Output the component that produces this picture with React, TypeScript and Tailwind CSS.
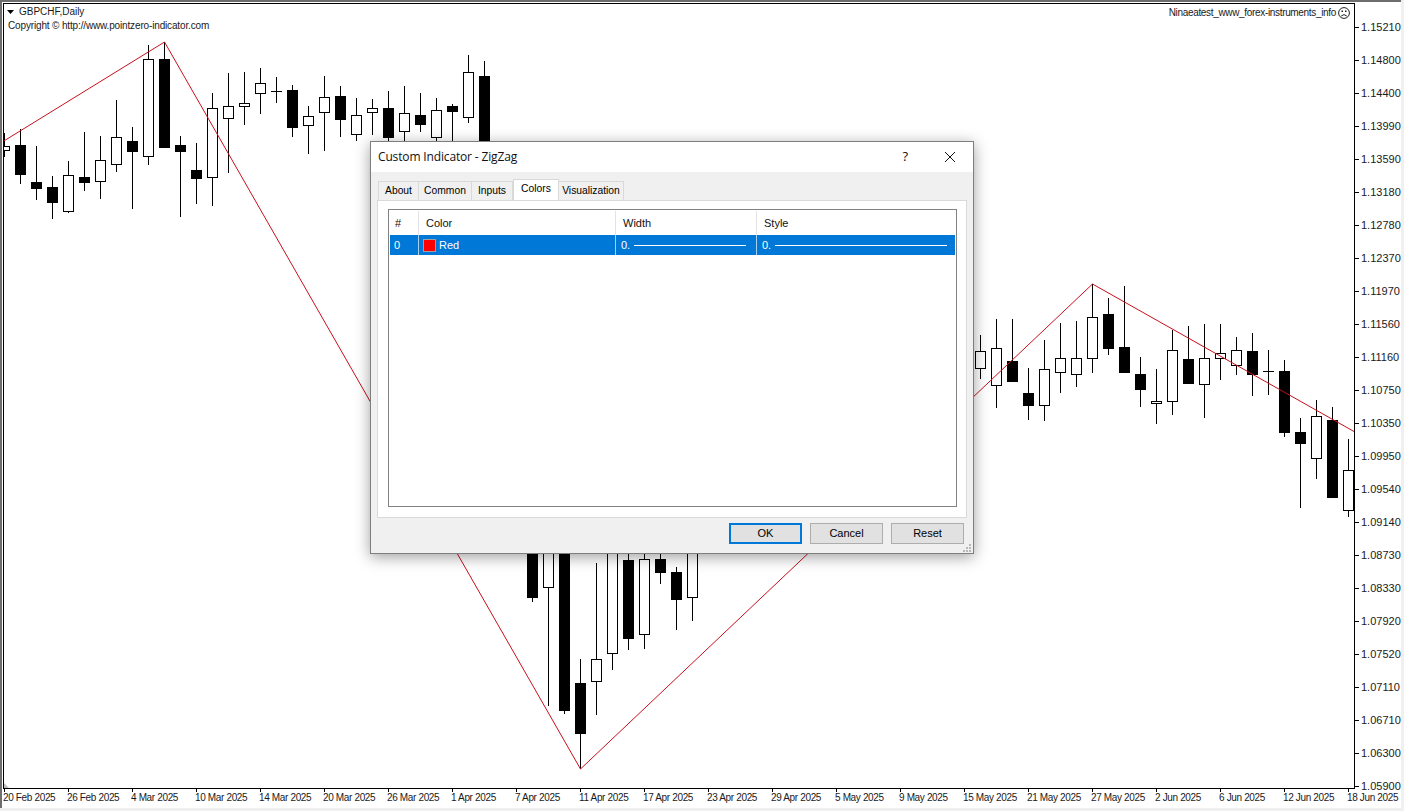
import React from "react";

type C = [number, number, number, number, number, "w" | "b"];

const candles: C[] = [
  [4, 133, 157, 146, 150, "w"],
  [20, 129, 184, 145, 174, "b"],
  [36, 146, 200, 182, 188, "b"],
  [52, 176, 219, 187, 202, "b"],
  [68, 161, 213, 175, 211, "w"],
  [84, 132, 191, 177, 182, "b"],
  [100, 136, 199, 160, 181, "w"],
  [116, 100, 172, 137, 164, "w"],
  [132, 127, 209, 141, 151, "b"],
  [148, 45, 165, 59, 156, "w"],
  [164, 42, 148, 59, 147, "b"],
  [180, 136, 217, 145, 151, "b"],
  [196, 143, 204, 170, 178, "b"],
  [212, 93, 206, 108, 177, "w"],
  [228, 73, 173, 106, 118, "w"],
  [244, 72, 125, 103, 106, "w"],
  [260, 68, 114, 83, 93, "w"],
  [276, 77, 103, 91, 91, "w"],
  [292, 85, 137, 90, 127, "b"],
  [308, 106, 154, 116, 125, "w"],
  [324, 76, 151, 97, 112, "w"],
  [340, 86, 137, 96, 119, "b"],
  [356, 98, 141, 115, 134, "w"],
  [372, 99, 135, 108, 112, "w"],
  [388, 91, 150, 108, 137, "b"],
  [404, 86, 150, 113, 131, "w"],
  [420, 93, 132, 115, 124, "b"],
  [436, 98, 150, 110, 137, "w"],
  [452, 104, 150, 106, 111, "b"],
  [468, 55, 123, 72, 117, "w"],
  [484, 61, 160, 76, 160, "b"],
  [532, 540, 602, 540, 597, "b"],
  [548, 540, 706, 540, 587, "w"],
  [564, 540, 714, 540, 710, "b"],
  [580, 659, 769, 683, 733, "b"],
  [596, 563, 715, 659, 681, "w"],
  [612, 540, 670, 540, 653, "w"],
  [628, 540, 650, 560, 638, "b"],
  [644, 540, 649, 559, 634, "w"],
  [660, 540, 584, 559, 572, "b"],
  [676, 567, 630, 572, 599, "b"],
  [692, 540, 621, 540, 597, "w"],
  [980, 335, 379, 351, 368, "w"],
  [996, 319, 408, 348, 385, "w"],
  [1012, 319, 381, 361, 381, "b"],
  [1028, 368, 420, 393, 405, "b"],
  [1044, 340, 421, 369, 405, "w"],
  [1060, 323, 393, 358, 372, "w"],
  [1076, 321, 387, 358, 374, "w"],
  [1092, 284, 373, 317, 358, "w"],
  [1108, 298, 355, 314, 348, "b"],
  [1124, 286, 373, 347, 372, "b"],
  [1140, 357, 407, 374, 389, "b"],
  [1156, 369, 424, 401, 403, "w"],
  [1172, 330, 415, 350, 401, "w"],
  [1188, 326, 383, 359, 383, "b"],
  [1204, 324, 418, 358, 384, "w"],
  [1220, 324, 380, 353, 358, "w"],
  [1236, 337, 375, 350, 365, "w"],
  [1252, 333, 396, 351, 374, "b"],
  [1268, 350, 395, 371, 371, "w"],
  [1284, 360, 437, 371, 432, "b"],
  [1300, 418, 508, 432, 443, "b"],
  [1316, 400, 479, 416, 458, "w"],
  [1332, 407, 497, 420, 497, "b"],
  [1348, 439, 517, 470, 510, "w"],
];

const prices = [
  "1.15210", "1.14800", "1.14400", "1.13990", "1.13590", "1.13180", "1.12780", "1.12370",
  "1.11970", "1.11560", "1.11160", "1.10750", "1.10350", "1.09950", "1.09540", "1.09140",
  "1.08730", "1.08330", "1.07920", "1.07520", "1.07110", "1.06710", "1.06300", "1.05900",
];

const dates = [
  "20 Feb 2025", "26 Feb 2025", "4 Mar 2025", "10 Mar 2025", "14 Mar 2025", "20 Mar 2025",
  "26 Mar 2025", "1 Apr 2025", "7 Apr 2025", "11 Apr 2025", "17 Apr 2025", "23 Apr 2025",
  "29 Apr 2025", "5 May 2025", "9 May 2025", "15 May 2025", "21 May 2025", "27 May 2025",
  "2 Jun 2025", "6 Jun 2025", "12 Jun 2025", "18 Jun 2025",
];

function Candle({ c }: { c: C }) {
  const [x, wt, wb, bt, bb, kind] = c;
  const doji = bt === bb;
  return (
    <g shapeRendering="crispEdges">
      <rect x={x} y={wt} width={1} height={wb - wt} fill="#000" />
      {doji ? (
        <rect x={x - 5} y={bt} width={11} height={1} fill="#000" />
      ) : kind === "b" ? (
        <rect x={x - 5} y={bt} width={11} height={bb - bt + 1} fill="#000" />
      ) : (
        <rect x={x - 4.5} y={bt + 0.5} width={10} height={bb - bt} fill="#fff" stroke="#000" strokeWidth={1} />
      )}
    </g>
  );
}

function Tab({ label, w, active }: { label: string; w: string; active?: boolean }) {
  return (
    <div
      className={
        active
          ? `${w} h-[21px] -mb-px pb-[2px] z-10 bg-white border border-b-0 border-[#d9d9d9] flex items-center justify-center text-black text-[10.3px]`
          : `${w} h-[19px] mt-[2px] bg-[#f0f0f0] border border-b-0 border-l-0 first:border-l border-[#d9d9d9] flex items-center justify-center text-black text-[10.3px]`
      }
    >
      {label}
    </div>
  );
}

export default function App() {
  return (
    <div className="relative w-[1404px] h-[811px] overflow-hidden bg-[#f0f0f0] font-['Liberation_Sans',sans-serif] text-[11px] leading-none text-[#1a1a1a]">
      <div className="w-[1401px] h-[808px] bg-white border-t-2 border-l-2 border-[#6e6e6e] pt-px pl-px">
        <div className="flex items-start h-[786px]">
          <div className="relative w-[1352px] h-[786px] border border-black bg-white">
            <svg className="block" width={1350} height={784} viewBox="4 4 1350 784">
              {candles.map((c) => (
                <Candle key={c[0]} c={c} />
              ))}
              <polyline
                points="3,141.5 164.5,42 580.5,769 1092.5,284 1354,431.5"
                fill="none"
                stroke="#c8101c"
                strokeWidth={1}
              />
              <polygon points="4,783 4,788 9,788" fill="#bdbdbd" />
            </svg>
            <div className="absolute left-[3px] top-[3px] flex flex-col gap-[4px]">
              <div className="flex items-center h-[10px] gap-[5px]">
                <svg width={7} height={4} viewBox="0 0 7 4">
                  <polygon points="0,0 7,0 3.5,4" fill="#000" />
                </svg>
                <span className="text-[10px] tracking-[-0.02px]">GBPCHF,Daily</span>
              </div>
              <span className="h-[10px] pl-px text-[10px] tracking-[-0.15px] whitespace-nowrap">Copyright © http://www.pointzero-indicator.com</span>
            </div>
            <div className="absolute right-[4px] top-[3px] flex items-center gap-[2px]">
              <span className="text-[10px] tracking-[-0.33px] whitespace-nowrap">Ninaeatest_www_forex-instruments_info</span>
              <svg width={12} height={12} viewBox="0 0 12 12" fill="none" stroke="#222" strokeWidth={1}>
                <circle cx={6} cy={6} r={5.4} />
                <rect x={3.5} y={3.5} width={1.5} height={1.5} fill="#222" stroke="none" />
                <rect x={7} y={3.5} width={1.5} height={1.5} fill="#222" stroke="none" />
                <path d="M3.2 9 Q6 6.2 8.8 9" />
              </svg>
            </div>
          </div>
          <div className="pt-[8px] h-[786px]">
            {prices.map((p) => (
              <div key={p} className="flex items-center h-[33px]">
                <div className="w-[4px] h-px bg-black" />
                <span className="ml-[2px]">{p}</span>
              </div>
            ))}
          </div>
        </div>
        <div className="flex pl-px">
          {dates.map((d) => (
            <div key={d} className="w-[64px] shrink-0 flex flex-col items-start">
              <div className="w-px h-[3px] bg-black" />
              <span className="mt-[1px] -ml-[1px] whitespace-nowrap text-[10px] tracking-[-0.35px]">{d}</span>
            </div>
          ))}
        </div>
      </div>

      {/* Dialog */}
      <div className="absolute left-[370px] top-[141px] w-[604px] h-[413px] flex flex-col bg-[#f0f0f0] border border-[#7e7e7e] shadow-[0_3px_14px_rgba(0,0,0,0.38)] text-[11px] text-black">
        <div className="h-[30px] shrink-0 bg-white flex items-center pl-[7px] pr-[17px] text-[12px] text-[#111] font-['Open_Sans',sans-serif] tracking-[-0.15px]">
          <span className="flex-1">Custom Indicator - ZigZag</span>
          <span className="mr-[36px] text-[13px] -mt-[2px]">?</span>
          <svg width={12} height={12} viewBox="0 0 12 12" fill="none" stroke="#111" strokeWidth={1}>
            <path d="M1 1 L11 11 M11 1 L1 11" />
          </svg>
        </div>
        <div className="flex-1 flex flex-col px-[6px] pt-[7px]">
          <div className="flex h-[21px] pl-px">
            <Tab label="About" w="w-[41px]" />
            <Tab label="Common" w="w-[53px]" />
            <Tab label="Inputs" w="w-[41px]" />
            <Tab label="Colors" w="w-[46px]" active />
            <Tab label="Visualization" w="w-[65px]" />
          </div>
          <div className="h-[318px] bg-white border border-[#d9d9d9] pt-[8px] pl-[10px]">
            <div className="w-[569px] h-[298px] border border-[#828282] p-px">
              <div className="flex h-[24px] items-center text-[#111]">
                <div className="w-[29px] h-full flex items-center pl-[5px] border-r border-[#e3e3e3]">#</div>
                <div className="w-[197px] h-full flex items-center pl-[7px] border-r border-[#e3e3e3]">Color</div>
                <div className="w-[141px] h-full flex items-center pl-[7px] border-r border-[#e3e3e3]">Width</div>
                <div className="flex-1 h-full flex items-center pl-[7px]">Style</div>
              </div>
              <div className="flex h-[20px] items-center bg-[#0078d7] text-white">
                <div className="w-[29px] h-full flex items-center pl-[4px] border-r border-[#a8d0ef]">0</div>
                <div className="w-[197px] h-full flex items-center pl-[4px] gap-[3px] border-r border-[#a8d0ef]">
                  <div className="w-[13px] h-[13px] bg-[#ff0000] border border-[#a0a0a0]" />
                  <span>Red</span>
                </div>
                <div className="w-[141px] h-full flex items-center pl-[5px] pr-[10px] gap-[4px] border-r border-[#a8d0ef]">
                  <span>0.</span>
                  <div className="flex-1 h-px bg-white" />
                </div>
                <div className="flex-1 h-full flex items-center pl-[5px] pr-[8px] gap-[4px]">
                  <span>0.</span>
                  <div className="flex-1 h-px bg-white" />
                </div>
              </div>
            </div>
          </div>
          <div className="flex justify-end gap-[8px] pt-[5px] pr-[3px]">
            <div className="w-[73px] h-[21px] bg-[#e1e1e1] border-2 border-[#0078d7] flex items-center justify-center">OK</div>
            <div className="w-[73px] h-[21px] bg-[#e1e1e1] border border-[#adadad] flex items-center justify-center">Cancel</div>
            <div className="w-[73px] h-[21px] bg-[#e1e1e1] border border-[#adadad] flex items-center justify-center">Reset</div>
          </div>
        </div>
        <svg className="absolute right-0 bottom-0" width={11} height={10} viewBox="0 0 11 10" fill="#b8b8b8">
          <rect x={7} y={1} width={2} height={2} />
          <rect x={4} y={4} width={2} height={2} />
          <rect x={7} y={4} width={2} height={2} />
          <rect x={1} y={7} width={2} height={2} />
          <rect x={4} y={7} width={2} height={2} />
          <rect x={7} y={7} width={2} height={2} />
        </svg>
      </div>
    </div>
  );
}
